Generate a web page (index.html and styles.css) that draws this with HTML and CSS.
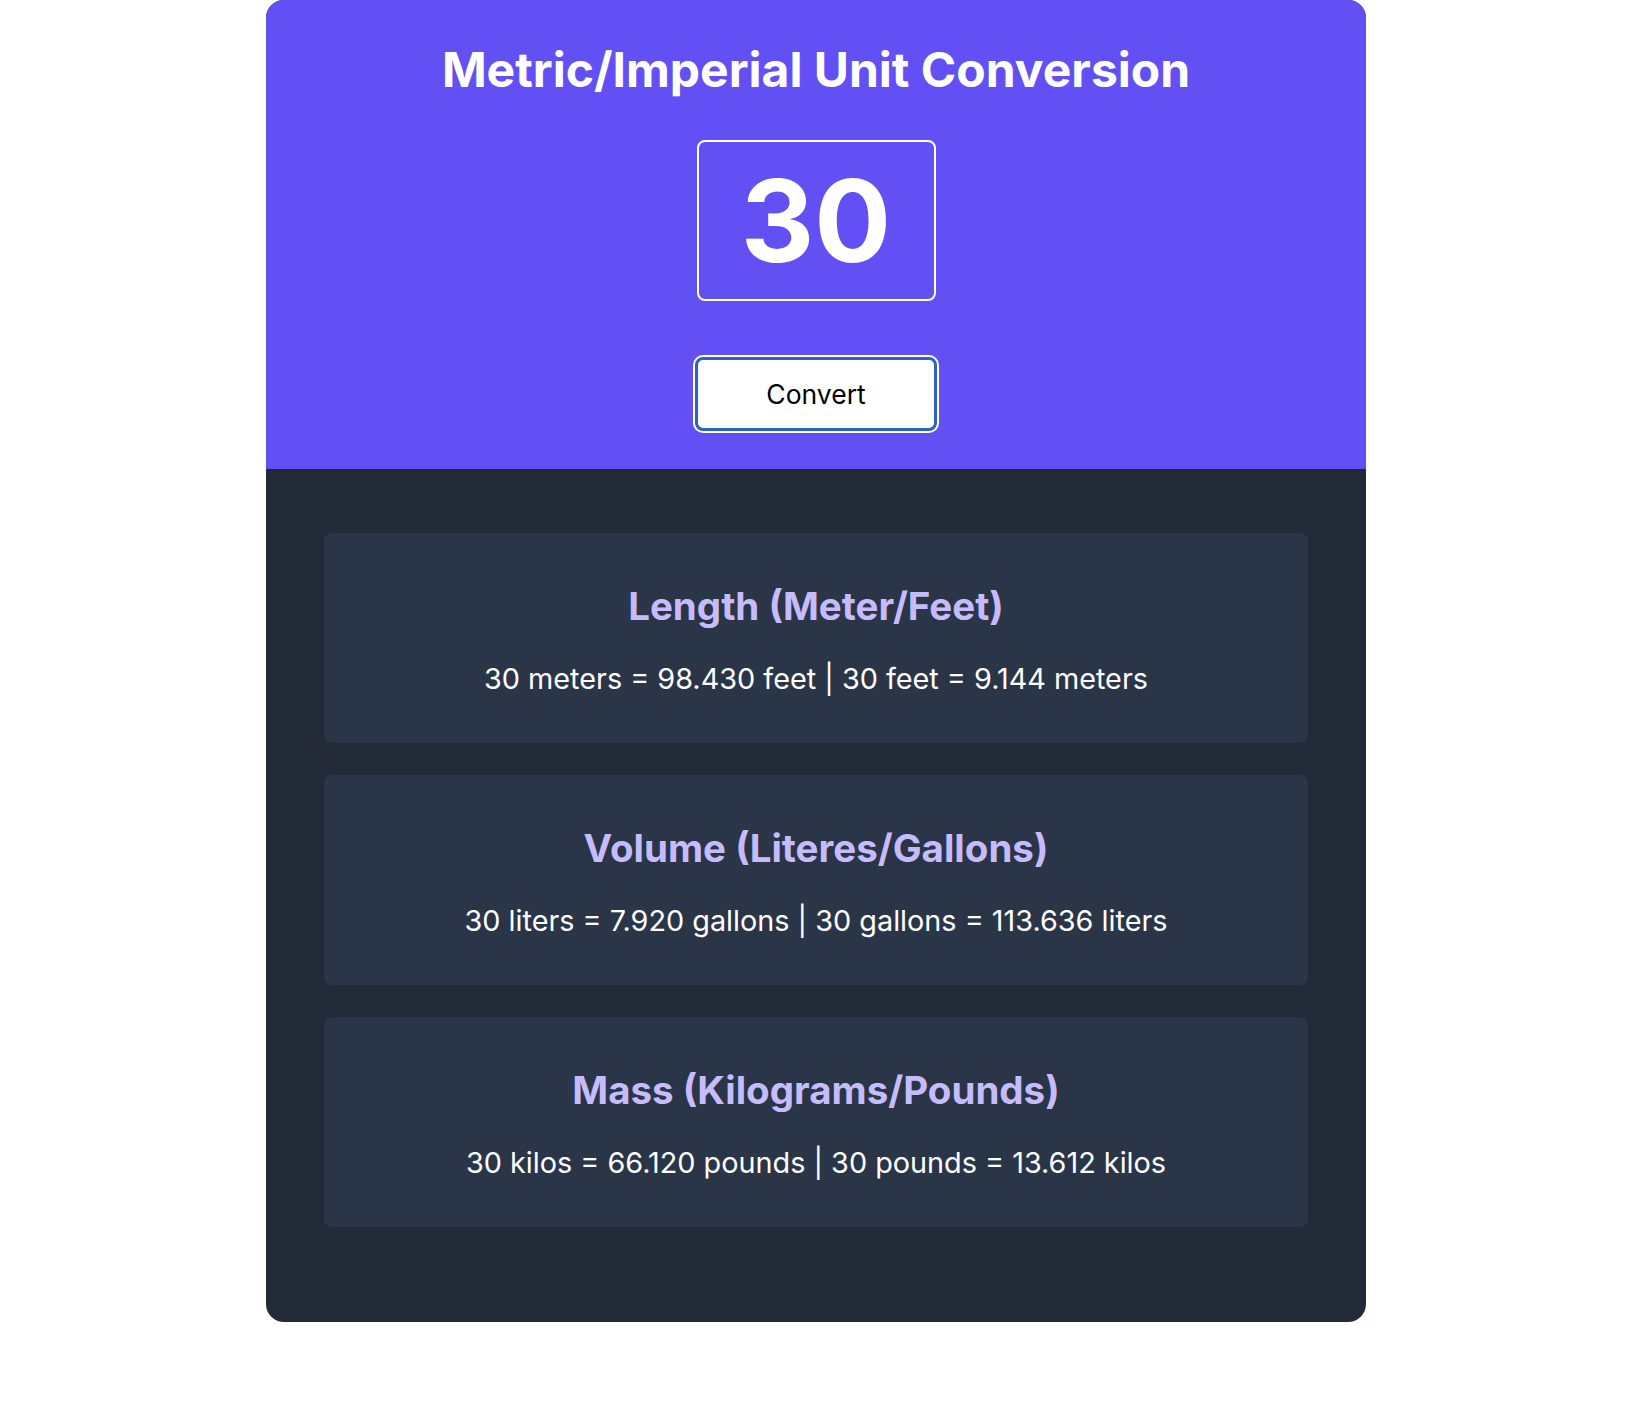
FILE: index.html
```html
<!DOCTYPE html>
<html lang="en">
<head>
<meta charset="utf-8">
<title>Metric/Imperial Unit Conversion</title>
<link rel="stylesheet" href="styles.css">
</head>
<body>
<div class="page">
  <main class="card">
    <section class="top">
      <h1 class="title">Metric/Imperial Unit Conversion</h1>
      <input class="value-input" type="text" value="30" aria-label="Value">
      <button class="convert-btn" type="button">Convert</button>
    </section>
    <section class="results">
      <div class="panel">
        <h2 class="panel-title">Length (Meter/Feet)</h2>
        <p class="panel-text">30 meters = 98.430 feet | 30 feet = 9.144 meters</p>
      </div>
      <div class="panel">
        <h2 class="panel-title">Volume (Literes/Gallons)</h2>
        <p class="panel-text">30 liters = 7.920 gallons | 30 gallons = 113.636 liters</p>
      </div>
      <div class="panel">
        <h2 class="panel-title">Mass (Kilograms/Pounds)</h2>
        <p class="panel-text">30 kilos = 66.120 pounds | 30 pounds = 13.612 kilos</p>
      </div>
    </section>
  </main>
</div>
</body>
</html>
```

FILE: styles.css
```css
* { box-sizing: border-box; }

html, body {
  margin: 0;
  padding: 0;
  background: #ffffff;
  font-family: "Inter", "Noto Sans", "Liberation Sans", sans-serif;
}

.page {
  display: flex;
  justify-content: center;
  padding-right: 6px;
}

.card {
  width: 1100px;
  border-radius: 18px;
  overflow: hidden;
  background: #222937;
}

.top {
  background: #6350f5;
  display: flex;
  flex-direction: column;
  align-items: center;
  padding: 40px 0 38px;
}

.title {
  margin: 0;
  font-size: 48px;
  font-weight: 700;
  line-height: normal;
  color: #ffffff;
  text-align: center;
}

.value-input {
  margin-top: 41px;
  width: 239px;
  height: 161px;
  border: 2px solid #ffffff;
  border-radius: 8px;
  background: transparent;
  color: #ffffff;
  font-family: "Inter", "Noto Sans", sans-serif;
  font-size: 114px;
  font-weight: 700;
  text-align: center;
  padding: 0;
  outline: none;
}

.convert-btn {
  margin-top: 56px;
  width: 242px;
  height: 74px;
  background: #ffffff;
  border: 3px solid #2b62c8;
  border-radius: 8px;
  outline: 2px solid #ffffff;
  color: #000000;
  font-family: "Inter", "Noto Sans", sans-serif;
  font-size: 26.5px;
  font-weight: 400;
  cursor: pointer;
}

.results {
  padding: 64px 58px 95px;
  display: flex;
  flex-direction: column;
  gap: 32px;
}

.panel {
  background: #2b3548;
  border-radius: 8px;
  padding: 50px 20px 47px;
  text-align: center;
}

.panel-title {
  margin: 0 0 32px;
  font-size: 38.5px;
  font-weight: 700;
  line-height: normal;
  color: #c6bcfb;
}

.panel-text {
  margin: 0;
  font-size: 28.8px;
  font-weight: 400;
  line-height: normal;
  color: #ffffff;
}
```
